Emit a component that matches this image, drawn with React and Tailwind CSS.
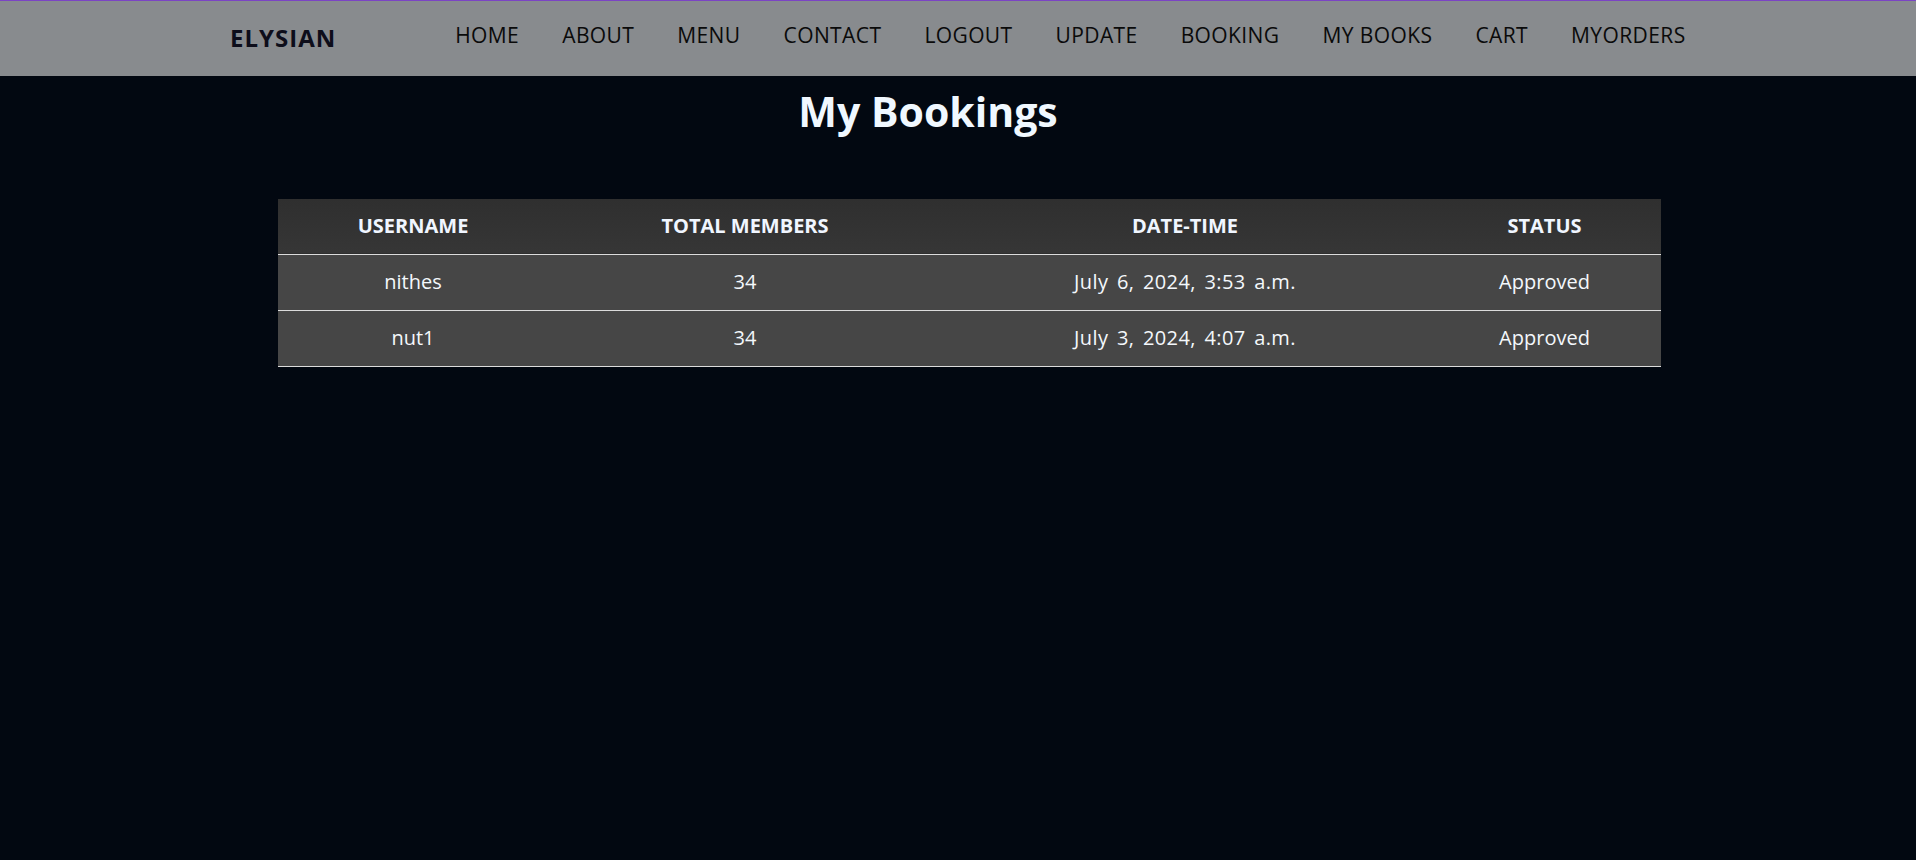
import React from 'react';

const links = ['HOME', 'ABOUT', 'MENU', 'CONTACT', 'LOGOUT', 'UPDATE', 'BOOKING', 'MY BOOKS', 'CART', 'MYORDERS'];

const bookings = [
    { user: 'nithes', members: 34, date: 'July 6, 2024, 3:53 a.m.', status: 'Approved' },
    { user: 'nut1', members: 34, date: 'July 3, 2024, 4:07 a.m.', status: 'Approved' },
];

export default function App() {
    return (
        <div className="min-h-screen w-full bg-[#020811] font-['Open_Sans',sans-serif]">
            <header className="h-[76px] bg-[#888b8e] border-t border-[#7b44c4] flex items-center pl-[230px]">
                <span className="text-[24px] font-bold text-[#0d0d1a] tracking-[1px] mb-[1px]">ELYSIAN</span>
                <nav className="flex items-center gap-[43px] ml-[119px] mb-[5px]">
                    {links.map((l) => (
                        <a key={l} href="#" className="text-[21px] tracking-[0.4px] text-[#0a0a0a]">
                            {l}
                        </a>
                    ))}
                </nav>
            </header>

            <h1 className="mt-[8px] pr-[60px] text-center text-[41px] leading-[54px] font-bold text-[#f0f8ff]">
                My Bookings
            </h1>

            <div className="mt-[61px] pl-[278px]">
                <table className="w-[1383px] border-collapse text-center text-[20px]">
                    <thead>
                        <tr className="h-[55px] bg-gradient-to-b from-[#2f2f2f] to-[#363636] border-b border-[#dcdcdc]">
                            <th className="w-[270px] font-bold text-[#f0f6ff]">USERNAME</th>
                            <th className="w-[394px] font-bold text-[#f0f6ff]">TOTAL MEMBERS</th>
                            <th className="w-[486px] font-bold text-[#f0f6ff]">DATE-TIME</th>
                            <th className="font-bold text-[#f0f6ff]">STATUS</th>
                        </tr>
                    </thead>
                    <tbody>
                        {bookings.map((b) => (
                            <tr key={b.user} className="h-[56px] bg-[#464646] border-b border-[#dcdcdc] text-[#f4f8fc]">
                                <td>{b.user}</td>
                                <td>{b.members}</td>
                                <td className="[word-spacing:3px] tracking-[0.4px]">{b.date}</td>
                                <td>{b.status}</td>
                            </tr>
                        ))}
                    </tbody>
                </table>
            </div>
        </div>
    );
}
